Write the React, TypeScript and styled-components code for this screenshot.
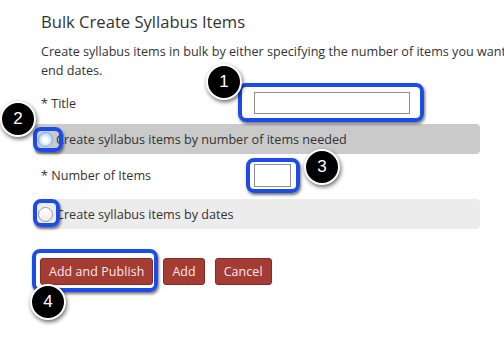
import React from "react";
import styled, { createGlobalStyle } from "styled-components";

const Global = createGlobalStyle`
  html, body { margin: 0; padding: 0; background: #fff; }
  body { font-family: "Open Sans", "DejaVu Sans", sans-serif; color: #333; }
`;

const Page = styled.div`
  position: relative;
  width: 504px;
  height: 337px;
  box-sizing: border-box;
  padding: 10px 24px 0 35px;
  overflow: hidden;
`;

const Heading = styled.h2`
  margin: 0;
  padding-left: 6px;
  font-size: 16.6px;
  line-height: 24px;
  font-weight: 400;
  color: #333;
`;

const Description = styled.p`
  margin: 8px 0 0;
  padding-left: 6px;
  font-size: 12.6px;
  line-height: 19px;
  color: #333;
  white-space: nowrap;
`;

const Form = styled.div`
  display: flex;
  flex-direction: column;
  gap: 10px;
  margin-top: 12px;
`;

const FieldRow = styled.div<{ $h: number }>`
  display: flex;
  align-items: center;
  height: ${(p) => p.$h}px;
  padding-left: 6px;
`;

const Label = styled.label`
  width: 213px;
  font-size: 12.6px;
  color: #333;
`;

const TextInput = styled.div<{ $w: number }>`
  width: ${(p) => p.$w}px;
  height: 100%;
  box-sizing: border-box;
  border: 1px solid #8f8f8f;
  background: #fff;
`;

const Band = styled.div<{ $bg: string; $gapBefore?: number }>`
  display: flex;
  align-items: center;
  height: 30px;
  margin-top: ${(p) => p.$gapBefore ?? 0}px;
  padding-left: 3px;
  border-radius: 4px;
  background: ${(p) => p.$bg};
  font-size: 12.6px;
  color: #333;
`;

const Radio = styled.span<{ $focused?: boolean }>`
  width: 15px;
  height: 15px;
  box-sizing: border-box;
  border-radius: 50%;
  border: 1px solid ${(p) => (p.$focused ? "#7fb0e6" : "#9a9a9a")};
  background: ${(p) =>
    p.$focused
      ? "radial-gradient(circle at 50% 55%, #ffffff 0 25%, #bfe0fb 60%, #8cc4f2 100%)"
      : "linear-gradient(#ffffff, #ececec)"};
  margin-right: 3px;
  flex: none;
`;

const Buttons = styled.div`
  display: flex;
  gap: 10px;
  margin-top: 29px;
  padding-left: 5px;
`;

const Button = styled.button`
  height: 27px;
  box-sizing: border-box;
  padding: 0 8px;
  border: 1px solid #842b25;
  border-radius: 3px;
  background: #a53c34;
  color: #f6ebe9;
  font-family: "Open Sans", sans-serif;
  font-size: 12.4px;
  font-weight: 400;
  letter-spacing: 0.1px;
`;

const Highlight = styled.div<{ $x: number; $y: number; $w: number; $h: number }>`
  position: absolute;
  left: ${(p) => p.$x}px;
  top: ${(p) => p.$y}px;
  width: ${(p) => p.$w}px;
  height: ${(p) => p.$h}px;
  box-sizing: border-box;
  border: 4px solid #1c4ce8;
  border-radius: 8px;
  box-shadow: 1px 2px 3px rgba(0, 0, 0, 0.55);
`;

const Marker = styled.div<{ $cx: number; $cy: number }>`
  position: absolute;
  left: ${(p) => p.$cx - 18}px;
  top: ${(p) => p.$cy - 18}px;
  width: 36px;
  height: 36px;
  box-sizing: border-box;
  border-radius: 50%;
  background: #000;
  border: 2px solid #fff;
  box-shadow: 1px 2px 4px rgba(0, 0, 0, 0.6);
  display: flex;
  align-items: center;
  justify-content: center;
  color: #fff;
  font-family: "Liberation Sans", Arial, sans-serif;
  font-size: 17px;
`;

const annotations = {
  highlights: [
    { x: 238, y: 83, w: 186, h: 39 },
    { x: 33, y: 127, w: 30, h: 25 },
    { x: 246, y: 158, w: 54, h: 35 },
    { x: 33, y: 199, w: 27, h: 28 },
    { x: 32, y: 249, w: 126, h: 43 },
  ],
  markers: [
    { n: 1, cx: 224, cy: 82 },
    { n: 2, cx: 18, cy: 119 },
    { n: 3, cx: 322, cy: 167 },
    { n: 4, cx: 48, cy: 302 },
  ],
};

export default function App() {
  return (
    <>
      <Global />
      <Page>
        <Heading>Bulk Create Syllabus Items</Heading>
        <Description>
          Create syllabus items in bulk by either specifying the number of items you want or by specifying start and
          <br />
          end dates.
        </Description>
        <Form>
          <FieldRow $h={22}>
            <Label>* Title</Label>
            <TextInput $w={156} />
          </FieldRow>
          <Band $bg="#cacaca">
            <Radio $focused />
            Create syllabus items by number of items needed
          </Band>
          <FieldRow $h={23}>
            <Label>* Number of Items</Label>
            <TextInput $w={37} />
          </FieldRow>
          <Band $bg="#ececec" $gapBefore={2}>
            <Radio />
            Create syllabus items by dates
          </Band>
        </Form>
        <Buttons>
          <Button>Add and Publish</Button>
          <Button>Add</Button>
          <Button>Cancel</Button>
        </Buttons>

        {annotations.highlights.map((h, i) => (
          <Highlight key={i} $x={h.x} $y={h.y} $w={h.w} $h={h.h} />
        ))}
        {annotations.markers.map((m) => (
          <Marker key={m.n} $cx={m.cx} $cy={m.cy}>
            {m.n}
          </Marker>
        ))}
      </Page>
    </>
  );
}
